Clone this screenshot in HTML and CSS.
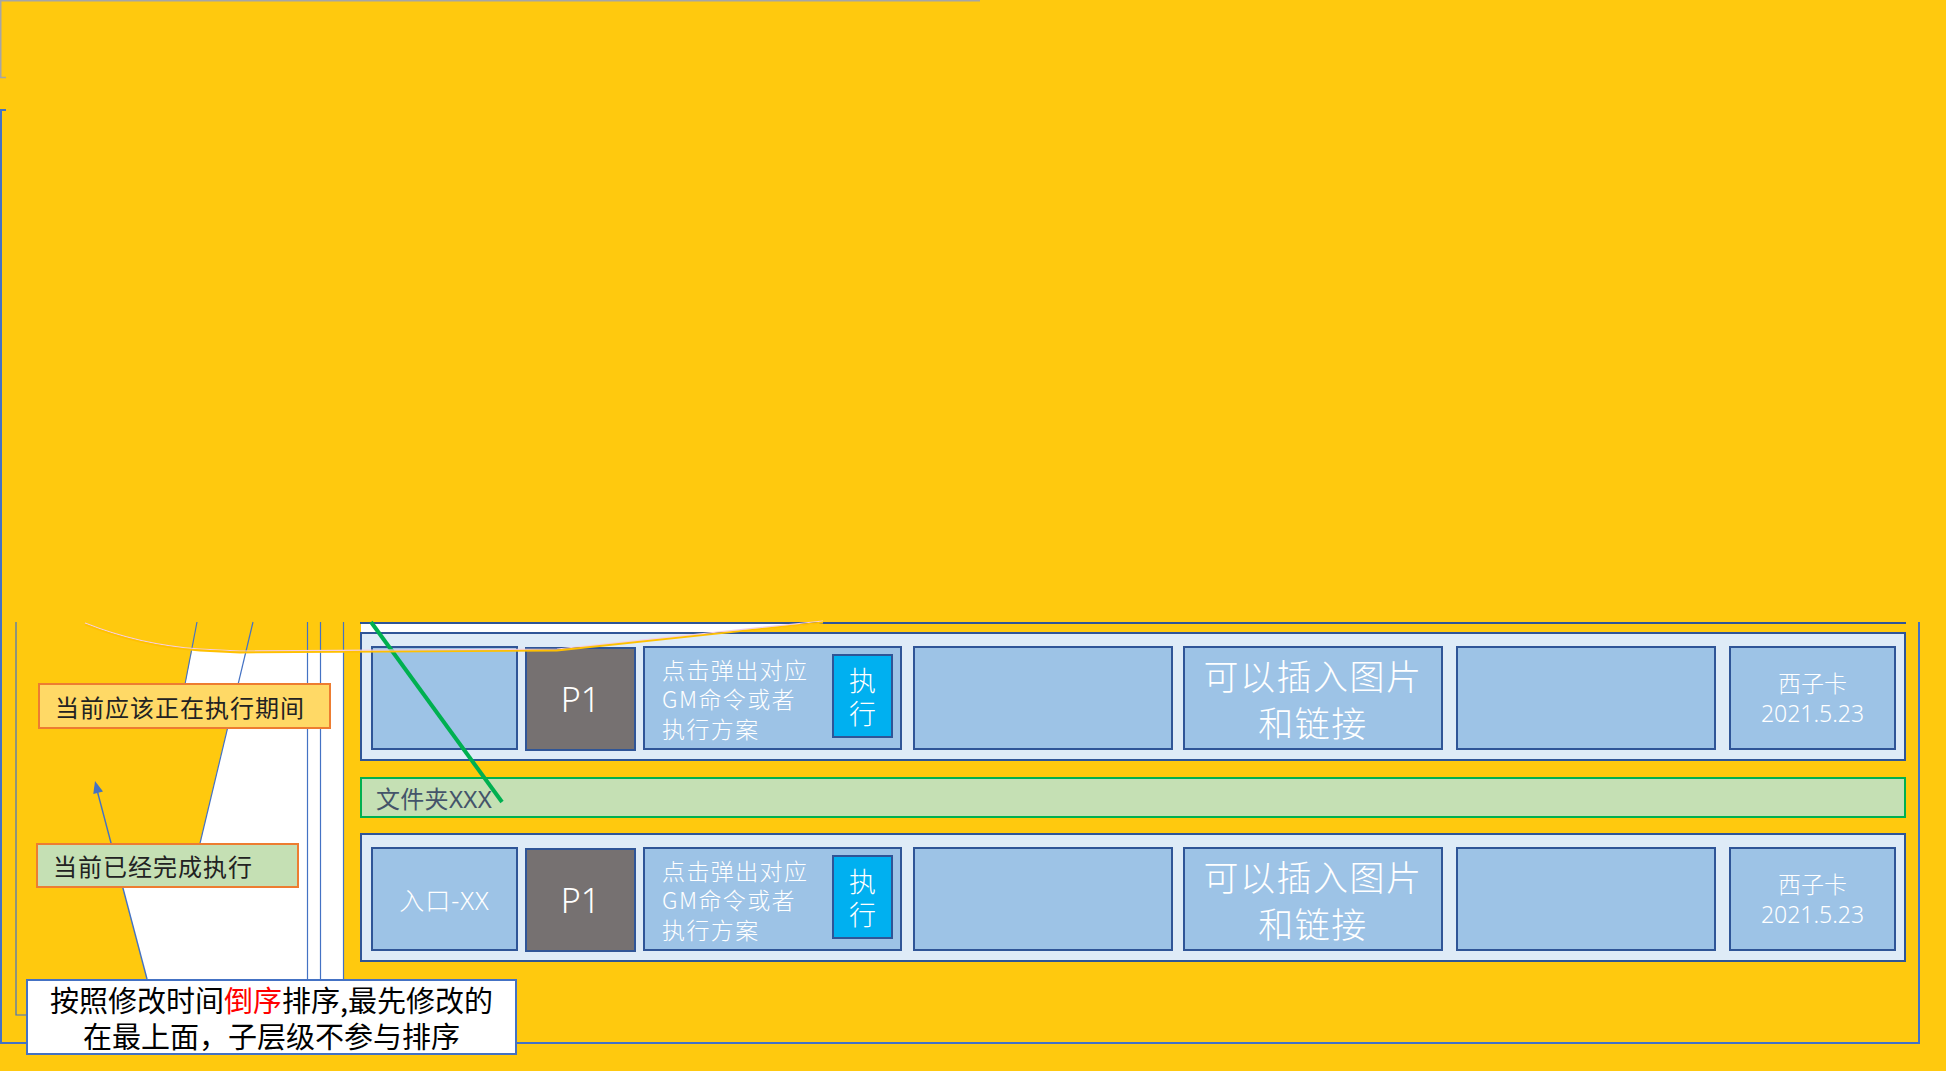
FILE: index.html
```html
<!DOCTYPE html>
<html lang="zh-CN">
<head>
<meta charset="utf-8">
<title>GM 执行列表</title>
<link rel="stylesheet" href="styles.css">
</head>
<body>
<div class="stage">
  <svg class="under" width="1946" height="1071" viewBox="0 0 1946 1071">
    <!-- white shapes -->
    <polygon fill="#ffffff" points="192,650 240,652 343,652 343,979 147,979 118,870 196,860 233,705 181,705"/>
    <polygon fill="#ffffff" points="361,623 823,623 557,650 361,650"/>
    <!-- gray frame at top -->
    <g stroke="#A5A5A5" stroke-width="1.5" fill="none">
      <line x1="0" y1="0.75" x2="980" y2="0.75"/>
      <line x1="0.75" y1="0" x2="0.75" y2="78"/>
      <line x1="0" y1="77.5" x2="6" y2="77.5"/>
    </g>
    <!-- outer blue frame -->
    <g stroke="#4472C4" stroke-width="2" fill="none">
      <line x1="6" y1="110" x2="0" y2="110"/>
      <polyline points="1,110 1,1043 1919,1043 1919,622"/>
    </g>
    <!-- inner lines -->
    <g stroke="#4472C4" stroke-width="1.2" fill="none">
      <polyline points="16,622 16,1015 26,1015"/>
      <line x1="307.5" y1="622" x2="307.5" y2="979"/>
      <line x1="320.5" y1="622" x2="320.5" y2="979"/>
      <line x1="343.5" y1="622" x2="343.5" y2="979"/>
      <line x1="197" y1="622" x2="181" y2="705"/>
      <line x1="253" y1="622" x2="196" y2="860"/>
      <line x1="147" y1="979" x2="97" y2="790" stroke-width="1.4"/>
    </g>
    <polygon fill="#4472C4" points="95,781 103,791.5 93.3,794"/>
  </svg>

  <div class="layout">
    <aside class="notes">
      <div class="label label-active">当前应该正在执行期间</div>
      <div class="label label-done">当前已经完成执行</div>
    </aside>

    <main class="list">
      <section class="row">
        <div class="cell c1"></div>
        <div class="cell prio">P1</div>
        <div class="cell cmd">
          <p class="cmd-text">点击弹出对应<br>GM命令或者<br>执行方案</p>
          <div class="run">执<br>行</div>
        </div>
        <div class="cell c4"></div>
        <div class="cell c5 big">可以插入图片<br>和链接</div>
        <div class="cell c6"></div>
        <div class="cell c7 meta">西子卡<br>2021.5.23</div>
      </section>

      <div class="folder">文件夹XXX</div>

      <section class="row">
        <div class="cell c1 entry">入口-XX</div>
        <div class="cell prio">P1</div>
        <div class="cell cmd">
          <p class="cmd-text">点击弹出对应<br>GM命令或者<br>执行方案</p>
          <div class="run">执<br>行</div>
        </div>
        <div class="cell c4"></div>
        <div class="cell c5 big">可以插入图片<br>和链接</div>
        <div class="cell c6"></div>
        <div class="cell c7 meta">西子卡<br>2021.5.23</div>
      </section>
    </main>

    <div class="note">按照修改时间<span class="hl">倒序</span>排序,最先修改的<br>在最上面，子层级不参与排序</div>
  </div>

  <svg class="over" width="1946" height="1071" viewBox="0 0 1946 1071">
    <line x1="371" y1="622" x2="502" y2="802" stroke="#00B050" stroke-width="4"/>
    <path d="M85,623 Q140,645 200,649 L240,651 L557,649 L823,621" fill="none" stroke="#F6CDE3" stroke-width="1.2"/>
    <path d="M85,624.5 Q140,646.5 200,650.5 L240,652.5 L557,650.5 L823,622.5" fill="none" stroke="#FFC000" stroke-width="1.8"/>
  </svg>
</div>
</body>
</html>
```

FILE: styles.css
```css
* { box-sizing: border-box; }

body {
  margin: 0;
  background: #FFC90E;
}

.stage {
  position: relative;
  width: 1946px;
  height: 1071px;
  overflow: hidden;
  background: #FFC90E;
  font-family: "Noto Sans", "Noto Sans CJK SC", sans-serif;
}

.under {
  position: absolute;
  left: 0;
  top: 0;
  z-index: 0;
}

.over {
  position: absolute;
  left: 0;
  top: 0;
  z-index: 2;
  pointer-events: none;
}

.layout {
  position: relative;
  z-index: 1;
  padding-top: 622px;
  display: grid;
  grid-template-columns: 360px 1546px;
  align-items: start;
}

/* left annotations */
.notes {
  padding-top: 61px;
  display: flex;
  flex-direction: column;
  align-items: flex-start;
}

.label {
  display: flex;
  align-items: center;
  padding-left: 15px;
  border: 2px solid #ED7D31;
  font-family: "Noto Sans CJK SC", sans-serif;
  font-size: 24px;
  letter-spacing: 1px;
  color: #222;
}

.label-active {
  margin-left: 38px;
  width: 293px;
  height: 46px;
  background: #FFD966;
}

.label-done {
  margin-left: 36px;
  margin-top: 114px;
  width: 263px;
  height: 45px;
  background: #C5E0B4;
}

/* main list */
.list {
  border-top: 2px solid #2F5597;
  padding-top: 8px;
  display: flex;
  flex-direction: column;
}

.row {
  height: 129px;
  display: flex;
  align-items: flex-start;
  padding: 12px 8px 0 9px;
  border: 2px solid #2F5597;
  background: #DEEBF7;
}

.cell {
  height: 104px;
  border: 2px solid #2F5597;
  background: #9DC3E6;
  color: #fff;
  display: flex;
  align-items: center;
  justify-content: center;
  text-align: center;
  font-weight: 300;
}

.c1 { width: 147px; }

.prio {
  width: 111px;
  margin-left: 7px;
  margin-top: 1px;
  background: #767171;
  font-size: 34px;
}

.cmd {
  width: 259px;
  margin-left: 7px;
  justify-content: space-between;
  padding: 0 7px 0 17px;
}

.cmd-text {
  margin: 0;
  text-align: left;
  font-family: "Noto Sans CJK SC", sans-serif;
  font-size: 23px;
  letter-spacing: 1.4px;
  line-height: 29.5px;
  margin-top: 2px;
}

.run {
  width: 61px;
  height: 84px;
  margin-bottom: 4px;
  border: 2px solid #2F5597;
  background: #00B0F0;
  display: flex;
  align-items: center;
  justify-content: center;
  font-family: "Noto Sans CJK SC", sans-serif;
  font-size: 27px;
  line-height: 33px;
}

.c4 { width: 260px; margin-left: 11px; }
.c5 { width: 260px; margin-left: 10px; }
.c6 { width: 260px; margin-left: 13px; }
.c7 { width: 167px; margin-left: 13px; }

.big {
  font-family: "Noto Sans CJK SC", sans-serif;
  font-size: 35px;
  line-height: 47px;
  letter-spacing: 1.5px;
}

.meta {
  font-size: 23px;
  line-height: 30px;
}

.entry {
  font-size: 25px;
  letter-spacing: 1px;
}

.folder {
  margin-top: 16px;
  margin-bottom: 15px;
  height: 41px;
  border: 2px solid #00B050;
  background: #C5E0B4;
  display: flex;
  align-items: center;
  padding-left: 14px;
  color: #44546A;
  font-size: 24px;
  letter-spacing: 0.3px;
}

/* bottom note */
.note {
  grid-column: 1 / 3;
  margin-top: 17px;
  margin-left: 26px;
  width: 491px;
  height: 76px;
  border: 2px solid #4472C4;
  background: #fff;
  color: #000;
  text-align: center;
  font-family: "Noto Sans CJK SC", sans-serif;
  font-size: 29px;
  line-height: 36px;
}

.hl { color: #FF0000; }
```
